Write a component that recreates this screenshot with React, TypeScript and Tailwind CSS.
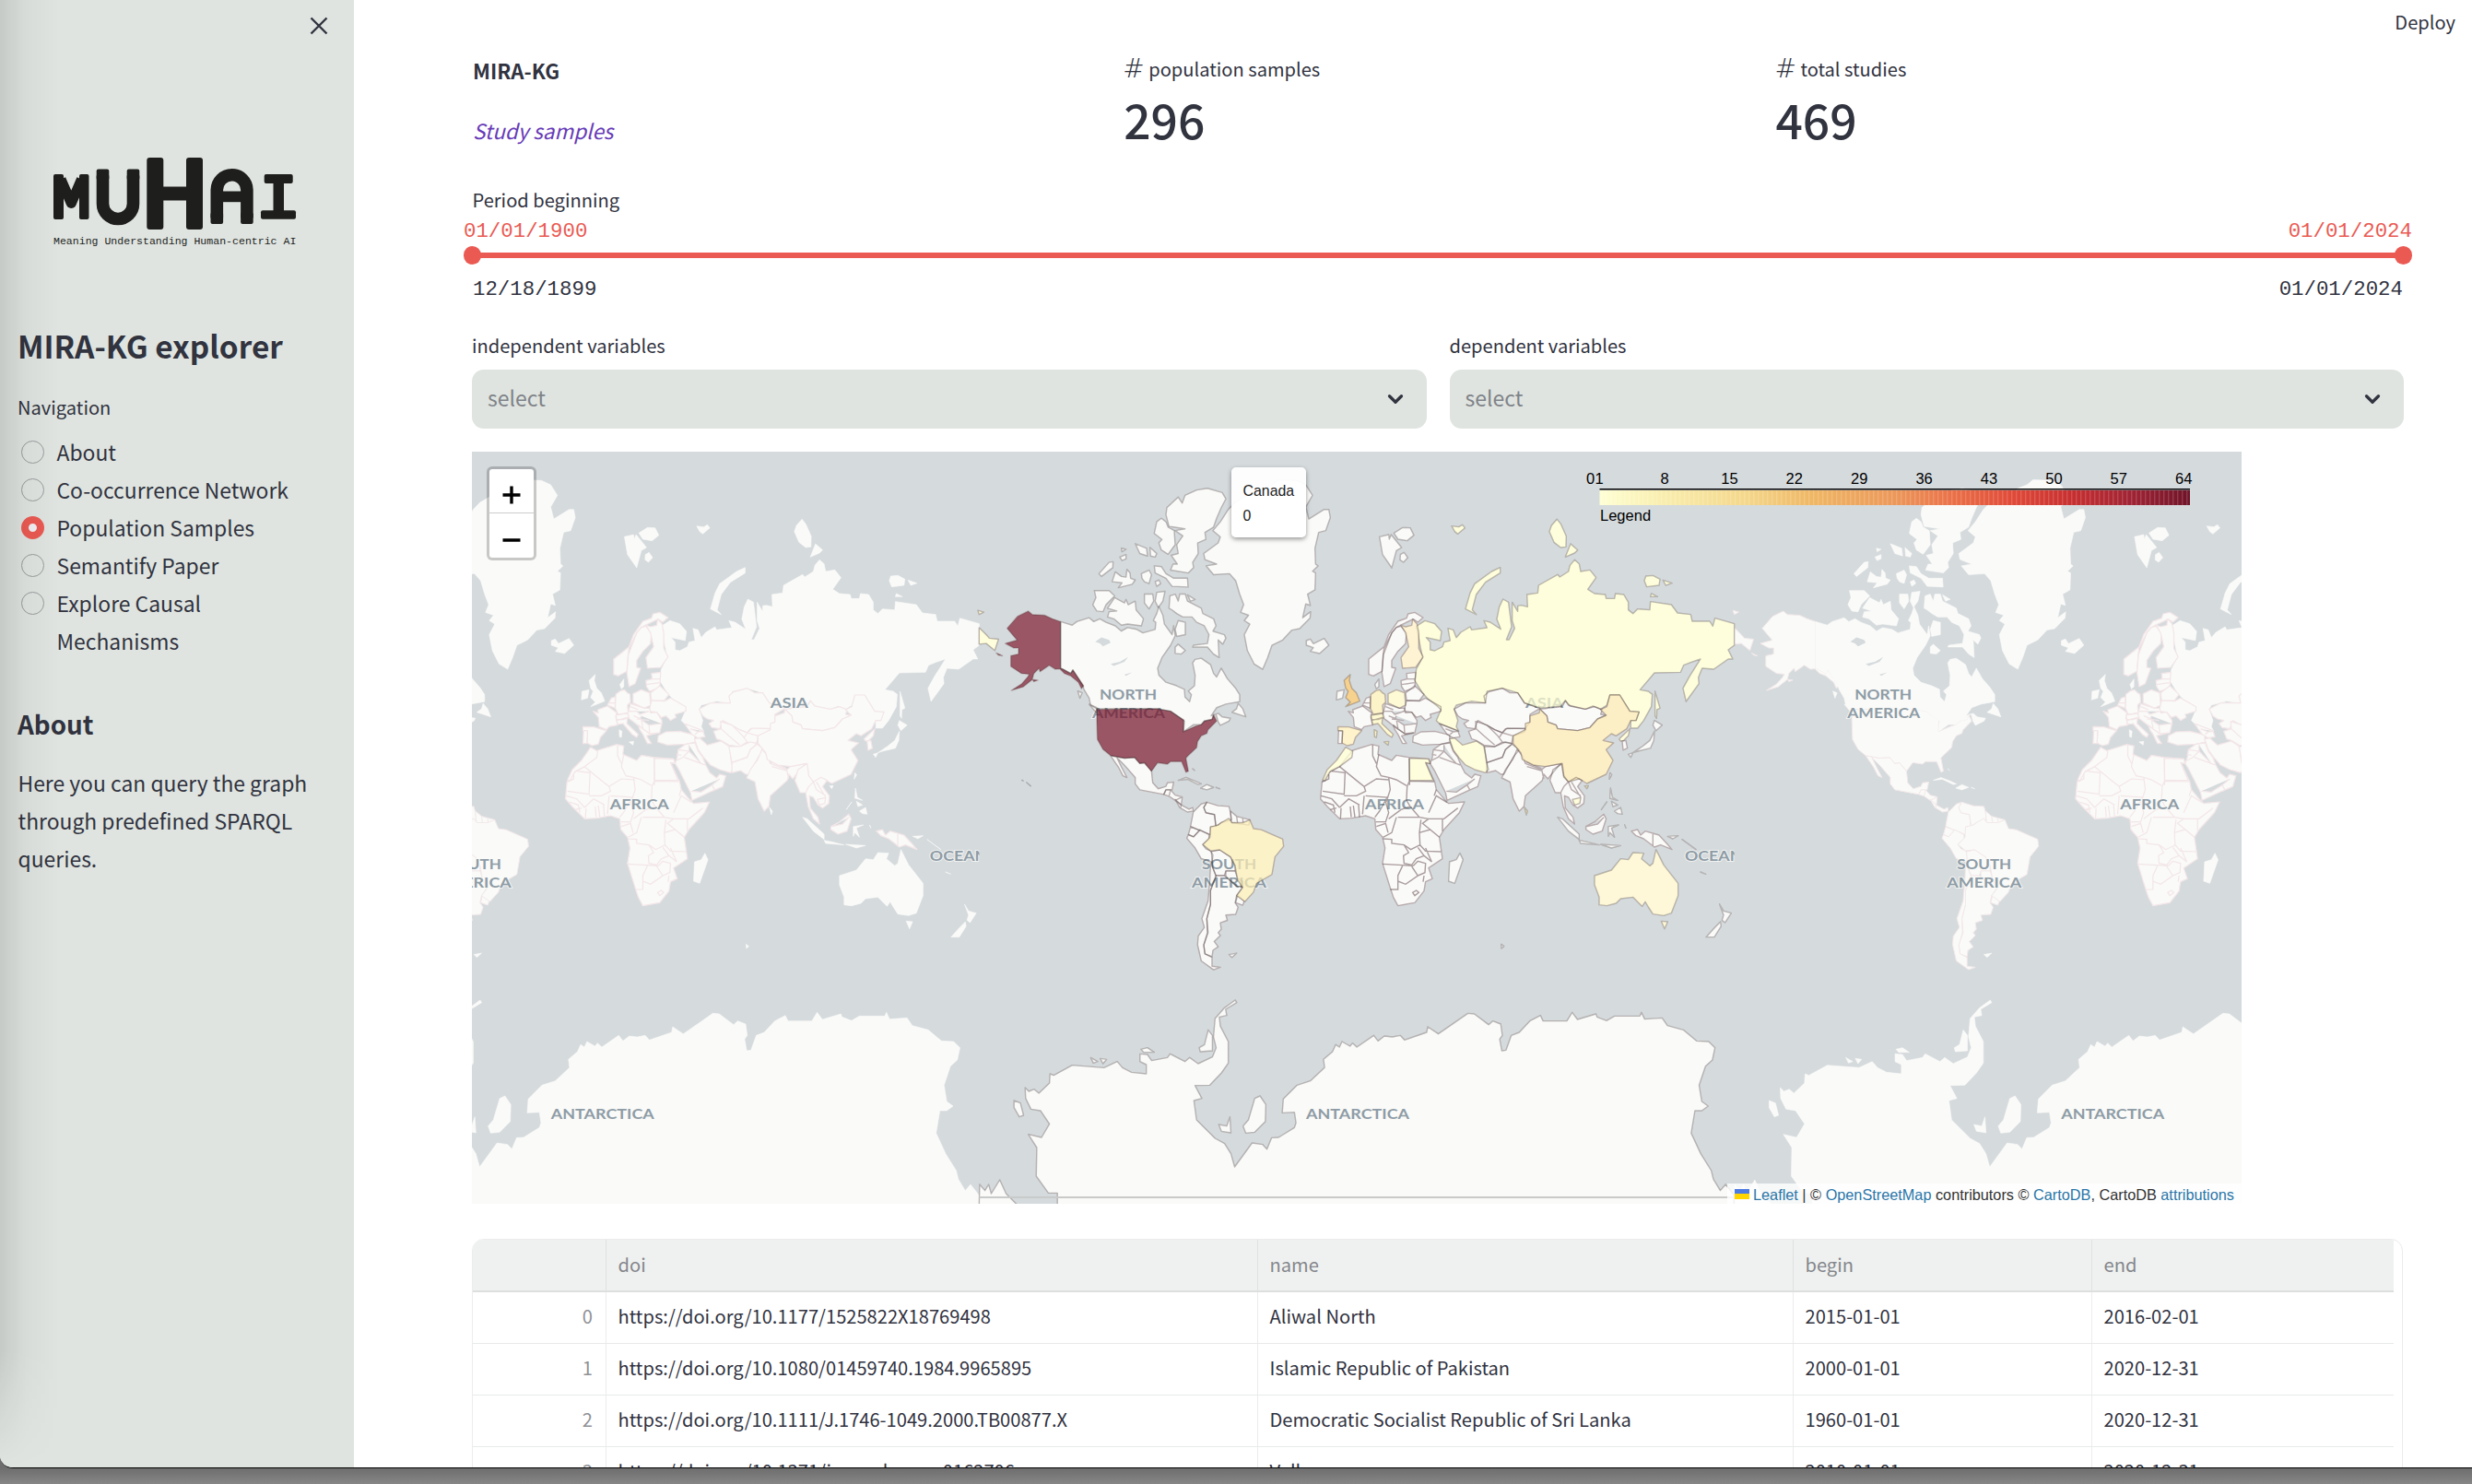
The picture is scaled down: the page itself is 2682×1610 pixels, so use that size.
import React from "react";
import { ChevronDown } from "lucide-react";

type Shape = { d: string; fill?: string };

const LAND = "#fafaf8";
const PALE = "#ffffd0";

// Each region is digitised on its own grid and placed by its transform.
const AMERICAS_TF = "translate(508 -10) scale(0.33333 0.38265)";
const EURASIA_TF = "translate(888 30) scale(0.33333)";
const ANTARCTIC_TF = "translate(548 550) scale(0.57398 0.33333)";
const WORLD = 819.2;

const americas: Shape[] = [
  { d: "M938,190 L912,225 888,250 912,268 905,285 858,315 862,332 900,345 866,350 890,375 942,372 962,392 975,430 988,460 978,482 1004,490 990,505 1008,515 990,545 1000,590 1022,628 1050,643 1066,610 1080,575 1115,560 1145,532 1170,528 1204,498 1206,480 1180,497 1190,458 1205,462 1196,430 1220,418 1222,370 1212,365 1230,350 1222,345 1220,300 1232,255 1255,250 1270,213 1265,190 1250,190 1200,217 1190,183 1212,150 1190,120 1160,108 1100,106 1080,120 1050,130 1040,150 1000,150 960,170Z" },
  { d: "M392,508 L430,518 445,508 485,497 500,508 520,500 540,510 570,520 590,535 610,525 640,530 660,540 700,530 702,510 694,505 705,485 712,465 725,490 730,515 755,545 760,520 765,548 750,575 722,610 708,640 712,660 735,680 770,690 795,700 797,722 812,735 818,715 808,705 828,690 830,660 822,625 830,615 850,612 880,630 890,655 900,665 915,640 935,670 960,695 975,715 975,735 930,742 900,752 882,775 905,768 918,778 945,782 940,790 912,802 905,792 898,770 890,772 885,785 860,790 850,800 825,800 792,820 795,790 750,762 705,755 510,755 490,745 485,725 468,700 465,690 432,645 425,655 400,643 392,640Z" },
  { d: "M738,185 L775,155 788,172 797,150 835,135 870,130 918,142 930,160 915,185 900,215 890,240 862,255 865,275 838,285 840,315 822,340 825,355 808,370 750,362 758,345 772,345 752,320 775,315 770,290 790,265 765,250 797,245 745,238 735,205Z" },
  { d: "M720,215 L735,225 742,240 762,250 765,290 742,317 720,305 712,285 722,275 697,258 705,225Z" },
  { d: "M635,287 L672,300 675,322 650,315Z M683,298 L705,315 700,325 685,322Z M590,300 L605,303 592,310Z M585,325 L605,318 605,330 592,335Z" },
  { d: "M517,372 L550,340 563,338 562,355 525,380Z M570,367 L590,380 605,382 608,360 618,370 620,385 635,390 625,402 580,412 592,398 560,395Z" },
  { d: "M655,372 L680,362 688,375 680,400 665,395 657,385Z M697,350 L720,352 735,372 760,385 805,385 807,410 755,408 735,385 700,370Z M700,395 L712,390 718,400 705,408Z" },
  { d: "M502,420 L550,420 568,435 540,460 530,480 510,478 497,460 507,440Z" },
  { d: "M568,440 L600,455 605,445 612,460 635,450 638,475 662,500 655,520 610,515 590,518 565,500 545,495 550,480 575,478 545,470Z" },
  { d: "M665,430 L692,430 695,450 680,472 665,455Z M705,425 L732,422 725,450 710,468 700,450Z" },
  { d: "M748,435 L765,430 775,450 780,430 798,430 805,450 850,470 855,485 890,500 898,520 888,535 925,545 930,555 920,572 905,560 908,610 890,600 870,580 822,580 825,575 870,570 875,545 860,520 835,510 820,495 790,495 770,485 755,475 745,470Z" },
  { d: "M775,505 L798,510 798,545 770,550 765,530Z M765,580 L775,572 798,590 785,600 765,598Z M805,432 L830,445 815,450Z" },
  { d: "M970,740 L985,755 995,778 950,765 965,755Z M485,742 L510,752 512,770Z M448,705 L462,710 455,725Z" },
  { d: "M775,958 L800,950 830,960 850,968 840,970 805,955Z M848,980 L868,970 890,978 868,985Z M898,978 L910,982Z M822,925 L828,930Z" },
  { d: "M940,1452 L965,1448 950,1460Z" },
];

const americasInner: Shape[] = [
  { d: "M555,888 L600,895 633,893 650,910 665,908 688,932 692,965 710,982 735,975 740,965 760,963 755,985 735,985 728,998 650,985 635,968 635,950 600,915 575,893 590,920 608,950 595,945 580,920 568,905Z" },
  { d: "M728,998 L735,985 750,985 765,1000 788,1005 785,1028 765,1015 745,1003Z M750,985 L745,1003 M765,1015 L788,1005" },
  { d: "M765,1012 L785,1028 810,1040 822,1035 824,1045 805,1048 780,1035Z M785,1028 L782,1037" },
  { d: "M824,1048 L850,1025 868,1020 858,1035 865,1050 893,1055 897,1088 880,1090 880,1112 840,1098 815,1088Z" },
  { d: "M868,1020 L905,1030 940,1032 945,1048 948,1070 915,1078 898,1088 893,1055 865,1050 858,1035Z" },
  { d: "M945,1045 L965,1060 1008,1070 1005,1085 948,1078Z M965,1060 L968,1078 M985,1064 L986,1078" },
  { d: "M815,1090 L845,1100 825,1118 808,1112Z" },
  { d: "M808,1112 L825,1118 845,1098 875,1112 875,1125 855,1140 865,1152 880,1158 888,1170 885,1190 850,1180 830,1150 803,1122Z" },
  { d: "M883,1160 L910,1155 945,1175 960,1200 960,1215 930,1215 925,1228 898,1228 887,1205Z" },
  { d: "M930,1215 L960,1215 968,1235 985,1245 985,1260 965,1258 930,1230Z" },
  { d: "M968,1283 L990,1300 985,1312 962,1305Z" },
  { d: "M898,1228 L925,1228 965,1258 985,1260 965,1285 960,1305 970,1318 962,1338 930,1340 935,1355 912,1362 915,1380 905,1390 912,1398 892,1415 905,1430 888,1440 885,1458 862,1450 858,1425 872,1390 868,1350 880,1310 880,1270Z" },
  { d: "M885,1190 L887,1205 898,1230 880,1270 880,1310 868,1350 870,1390 858,1425 862,1450 885,1460 885,1485 912,1488 890,1495 850,1470 838,1425 840,1400 860,1375 852,1350 872,1300 878,1240 880,1195Z" },
  { d: "M880,1090 L905,1085 915,1078 940,1066 950,1078 985,1078 1008,1070 1020,1095 1045,1098 1115,1125 1118,1145 1090,1175 1080,1225 1030,1250 1020,1275 992,1302 965,1285 985,1262 968,1240 960,1200 945,1175 910,1155 880,1158 855,1140 878,1120Z", fill: "#fceeb4" },
  { d: "M510,757 L705,755 750,762 793,787 792,820 830,805 850,800 860,790 885,785 890,772 900,790 872,815 868,825 850,832 838,848 835,865 805,890 800,895 808,932 800,935 786,905 750,905 740,912 708,908 688,932 665,908 650,910 633,893 600,895 555,888 530,870 512,842 510,790Z", fill: "#721026" },
  { d: "M392,508 L392,640 400,643 425,655 432,645 467,690 460,698 450,680 425,662 405,655 390,642 375,643 355,632 325,650 322,640 305,655 300,672 270,693 232,703 265,685 285,665 290,657 265,655 230,635 230,605 255,600 255,583 240,583 212,570 245,562 250,560 218,527 252,493 287,478 300,488 340,490 365,500Z M183,597 L203,605 190,603Z M300,672 L318,674 305,678Z", fill: "#721026" },
  { d: "M127,525 L150,545 160,555 190,558 178,590 150,570 127,572Z M123,476 L142,481 127,488Z", fill: PALE },
];

const eurasia: Shape[] = [
  { d: "M410,478 L438,460 470,470 492,495 488,525 442,515 455,530 455,555 470,558 495,545 500,530 520,525 513,485 530,490 540,515 555,498 585,480 590,490 640,483 630,460 650,465 685,488 672,455 680,415 692,390 710,400 715,440 720,480 703,522 712,522 730,485 722,460 722,400 740,430 740,412 752,410 772,415 770,375 805,370 808,345 870,310 877,318 905,300 910,280 925,262 940,275 945,300 975,295 995,320 968,358 990,372 1025,375 1028,388 1055,388 1058,372 1085,375 1100,400 1100,425 1115,437 1130,422 1170,425 1172,398 1240,408 1260,435 1303,440 1308,462 1365,462 1375,478 1382,452 1445,470 1445,540 1425,555 1440,585 1425,585 1378,618 1340,615 1328,645 1330,665 1288,723 1278,680 1300,640 1335,585 1305,595 1280,605 1270,628 1185,630 1138,685 1165,690 1178,700 1175,740 1150,785 1130,810 1108,810 1108,785 1125,785 1135,757 1105,755 1072,702 1040,702 1030,735 1010,748 985,738 960,748 905,735 895,720 880,738 815,745 762,728 740,695 690,680 640,690 635,728 590,722 540,735 533,748 545,785 540,805 548,820 485,795 475,785 490,750 478,738 445,712 430,695 405,655 410,618 430,580 422,540 415,500Z", fill: PALE },
  { d: "M683,287 L683,305 635,335 605,375 592,425 605,440 570,422 585,370 600,340 655,300Z M868,130 L880,145 898,185 897,220 880,222 858,205 843,170 850,150Z M912,210 L935,230 925,240 895,253Z M1157,315 L1180,313 1203,325 1200,345 1160,350 1152,330Z M1213,328 L1242,338 1222,345Z M1175,372 L1195,382 1172,382Z M525,152 L548,155 560,148 568,158 545,178 535,170Z M1187,690 L1203,745 1193,750 1192,778 1187,770Z", fill: PALE },
  { d: "M290,187 L320,180 322,195 328,180 362,222 345,232 330,288 300,245Z M337,175 L365,157 390,158 402,182 380,200 350,195Z M358,245 L370,238 382,255 368,270 357,262Z" },
  { d: "M52,525 L65,520 75,535 110,518 125,540 95,567 65,560 75,548 52,540Z" },
  { d: "M275,668 L288,650 288,675 280,682Z M152,690 L175,685 170,712 150,718Z" },
  { d: "M175,655 L195,635 192,655 200,680 215,695 226,722 180,740 195,725 180,710 188,690 180,680Z", fill: "#f5c162" },
  { d: "M1180,800 L1185,785 1210,800 1190,818Z M1185,820 L1183,850 1172,875 1130,885 1115,890 1145,870 1170,850Z M1100,895 L1115,890 1108,905Z M1040,955 L1046,962 1038,976Z" },
  { d: "M1042,1005 L1048,1035 1065,1045 1040,1038Z M1055,1080 L1075,1068 1080,1090 1065,1088Z M1045,1048 L1065,1060 1050,1065Z M1030,1050 L1012,1075Z" },
  { d: "M870,1100 L885,1105 940,1155 940,1172 905,1145Z M940,1175 L965,1180 1005,1190 945,1185Z M1035,1130 L1068,1125 1045,1135 1055,1165 1040,1150 1035,1162Z M1010,1188 L1075,1192 1045,1200Z M1088,1125 L1092,1135Z M1228,1162 L1262,1160 1245,1170Z M1275,1172 L1320,1205Z M1335,1278 L1352,1285Z" },
  { d: "M552,1217 L562,1238 535,1315 515,1308 518,1245 540,1238Z" },
  { d: "M990,1290 L1045,1272 1075,1235 1100,1238 1115,1215 1150,1217 1143,1235 1170,1258 1180,1250 1190,1205 1215,1255 1262,1315 1262,1355 1240,1412 1215,1420 1180,1415 1165,1392 1155,1375 1145,1390 1115,1360 1075,1365 1060,1380 1030,1388 1005,1385 1005,1360 990,1320Z M1207,1438 L1228,1440 1218,1463Z", fill: "#fff6ca" },
  { d: "M1397,1383 L1410,1405 1435,1412 1415,1443 1405,1435 1410,1418Z M1400,1440 L1402,1455 1380,1490 1353,1490 1380,1460Z M686,1513 L695,1520 687,1527Z" },
  { d: "M273,815 L282,820 280,840 274,838Z M305,855 L320,853 318,865Z M762,1068 L772,1080 768,1092Z M958,998 L970,997 965,1007Z", fill: "#fdf3b0" },
];

const eurasiaInner: Shape[] = [
  { d: "M432,450 L405,433 383,438 378,452 350,462 320,505 305,545 255,585 255,635 270,640 298,625 302,570 305,550 330,500 345,482 358,475 400,455 415,465Z" },
  { d: "M360,478 L378,500 375,535 350,560 330,590 330,612 343,615 325,665 305,675 298,630 303,570 330,500 345,482Z" },
  { d: "M360,475 L375,480 395,475 398,455 412,470 418,500 418,550 432,578 408,612 365,615 360,580 385,545 375,500Z", fill: "#fff0c3" },
  { d: "M155,805 L190,806 232,818 212,840 205,862 185,867 168,858 170,820 155,818Z", fill: "#fff0b8" },
  { d: "M157,818 L170,818 168,860 155,860Z" },
  { d: "M188,755 L205,760 203,750 235,738 265,760 262,775 268,800 240,805 232,815 208,805 205,775Z" },
  { d: "M262,700 L278,688 290,685 300,695 308,700 310,725 300,735 302,760 270,765 260,745Z", fill: "#fcefb4" },
  { d: "M235,735 L247,712 260,708 260,745Z M240,728 L260,728" },
  { d: "M318,698 L345,685 372,695 375,735 355,745 318,728Z", fill: "#fff9c8" },
  { d: "M360,655 L380,650 378,632 408,628 405,675 400,680 372,690 362,675Z M362,668 L403,662 M378,650 L405,650" },
  { d: "M375,695 L405,672 435,700 420,720 378,720Z" },
  { d: "M378,720 L420,722 440,712 490,740 490,755 455,765 458,775 440,785 425,770 410,775 395,758 370,755Z" },
  { d: "M302,760 L310,730 355,745 372,745 375,760 395,758 412,785 412,795 405,825 375,830 345,810 320,790 300,775Z M305,755 L330,755 340,765 370,755 M330,780 L370,785 M345,770 L340,780 370,800 410,795 M320,770 L345,780 350,810 M370,800 L372,825 M310,740 L335,750" },
  { d: "M262,768 L300,762 305,775 285,782 265,782Z M265,785 L300,775 298,795 335,830 330,840 315,830 285,795 268,798Z", fill: "#fdf8c0" },
  { d: "M335,800 L350,812 372,828 400,825 362,835 378,860 365,860 350,830 340,815Z" },
  { d: "M400,835 L425,822 470,820 518,832 520,855 490,862 430,865 398,855Z" },
  { d: "M485,795 L545,818 552,838 530,842 510,830Z M505,812 L530,822 545,820 M520,830 L530,822" },
  { d: "M533,748 L570,728 635,728 630,705 645,692 690,680 715,695 740,695 762,728 812,746 780,765 780,790 765,810 700,812 690,825 665,815 610,785 600,812 575,808 565,795 580,785 560,780 545,770Z" },
  { d: "M580,820 L605,812 603,788 640,800 665,815 690,825 705,810 765,812 762,822 725,835 720,860 690,855 665,870 630,865 605,850 590,845Z M605,812 L630,835 665,865 M680,840 L690,825 725,835 M640,800 L675,835 690,855" },
  { d: "M518,845 L535,842 560,865 605,852 632,870 638,920 645,945 635,955 600,945 570,930 548,905 530,880Z", fill: PALE },
  { d: "M630,870 L665,870 700,855 722,860 700,880 690,905 640,922Z" },
  { d: "M640,922 L690,905 700,880 722,862 745,880 725,905 695,960 685,960 668,948 640,955Z" },
  { d: "M738,878 L755,900 765,925 818,945 830,935 880,925 850,960 838,975 825,960 820,980 765,1030 760,1065 745,1080 725,1040 715,985 688,972 700,945 725,910Z M768,920 L815,940 816,948 770,935 M818,945 L825,975" },
  { d: "M812,748 L885,740 895,720 910,738 960,748 990,740 1015,750 1010,765 1028,768 1000,780 975,808 935,818 870,812 865,800 838,790 835,770Z" },
  { d: "M812,748 L835,770 838,790 865,800 870,812 935,818 975,808 1000,780 1028,768 1010,750 1030,740 1040,702 1072,702 1105,755 1135,757 1125,785 1108,785 1095,812 1060,835 1045,828 1018,850 1052,858 1028,880 1050,915 1028,960 965,990 940,975 905,985 890,970 882,925 830,935 790,930 755,912 750,890 725,860 725,835 765,815 765,795 780,790 780,770 810,760Z", fill: "#fceab1" },
  { d: "M1070,845 L1105,812 1100,835 1085,850 1075,852Z", fill: PALE },
  { d: "M1080,852 L1092,850 1097,875 1083,882Z" },
  { d: "M855,945 L885,925 890,965 905,985 930,970 950,980 935,1000 957,1030 955,1055 935,1070 920,1060 905,1035 892,1030 895,1070 920,1100 925,1122 905,1105 888,1065 880,1020 862,1020 845,980Z M890,1000 L905,985 915,1010 945,1030 M880,1020 L890,1000 M915,985 L945,1035" },
  { d: "M918,1042 L945,1036 942,1055 925,1060Z", fill: PALE },
  { d: "M962,1130 L990,1115 1020,1090 1028,1105 1015,1145 985,1155 962,1140Z M965,1130 L1000,1122 1020,1100" },
  { d: "M1110,1145 L1130,1140 1140,1158 1155,1145 1200,1158 1225,1185 1242,1205 1205,1190 1185,1197 1150,1170 1125,1160Z M1180,1152 L1180,1195" },
  { d: "M462,905 L465,880 490,862 520,858 530,885 545,905 555,930 568,955 590,972 600,960 620,965 610,1000 575,1015 510,1045 505,1020 470,950 455,925Z M465,880 L500,885 480,905 460,915 M500,865 L500,885 540,925 M485,905 L540,925 553,930 M508,1015 L540,1018 575,995 600,975 M575,995 L585,1012 M460,895 L475,898" },
  { d: "M203,882 L265,863 288,868 285,895 330,915 345,898 385,905 450,910 455,925 440,922 470,985 475,1010 500,1040 515,1055 567,1050 550,1085 500,1140 485,1165 495,1235 450,1265 462,1300 440,1310 435,1340 405,1378 350,1388 335,1360 325,1330 300,1250 308,1200 300,1165 278,1140 275,1105 245,1095 200,1103 160,1105 120,1065 98,1040 103,985 125,955 160,935Z" },
  { d: "M180,872 L203,885 200,905 160,935 130,950 112,982 105,978 120,945 150,915Z M387,908 L450,910 455,925 440,922 465,980 388,980Z", fill: PALE },
];

const africanBorders =
  "M160,935 L215,980 240,1000 280,975 320,978 M268,865 L268,900 280,925 M288,895 L280,935 295,965 320,970 M320,970 L345,978 378,997 M387,908 L388,995 M320,970 L325,1010 312,1050 M388,980 L380,1000 378,1045 390,1065 M388,982 L468,984 M135,950 L178,955 175,1025 105,1015 M175,1030 L215,1030 245,1015 240,1000 M125,960 L125,975 103,985 M245,1030 L315,1035 290,1080 275,1100 M165,1070 L163,1105 M195,1065 L198,1100 M205,1062 L210,1100 M222,1060 L225,1100 M240,1030 L235,1090 M160,1068 L190,1040 225,1060 M100,1030 L135,1040 160,1068 M110,1050 L140,1060 145,1085 M130,1075 L150,1070 M310,1050 L320,1085 310,1115 278,1115 M320,1105 L360,1075 390,1065 M390,1065 L420,1100 450,1105 500,1105 545,1070 M350,1100 L420,1100 M450,1085 L475,1030 510,1052 M425,1108 L420,1150 422,1190 392,1205 370,1190 330,1185 330,1172 302,1170 M345,1100 L330,1150 302,1165 M280,1130 L310,1120 318,1150 M420,1150 L455,1140 485,1165 M450,1105 L430,1120 455,1140 M495,1105 L495,1145 M422,1190 L440,1210 490,1212 M300,1252 L400,1258 M370,1190 L385,1215 368,1225 370,1250 395,1255 410,1235 435,1225 415,1198 M435,1225 L460,1245 440,1200 M365,1258 L350,1290 350,1335 325,1335 M350,1308 L375,1318 415,1290 395,1260 M415,1290 L438,1280 440,1250 415,1243 400,1258 M435,1290 L432,1310 M398,1345 L410,1338 418,1345 405,1355Z M475,1010 L468,1030";

const antarctica: Shape[] = [
  { d: "M135,763 L112,708 113,615 97,572 122,582 137,538 120,495 102,490 92,455 91,420 98,432 108,425 117,438 137,405 138,375 145,380 180,347 240,355 265,335 275,355 292,370 320,375 320,345 308,335 308,310 322,312 330,332 360,322 365,310 393,335 402,322 418,342 445,320 452,290 447,255 450,195 468,160 488,135 491,143 470,165 472,185 458,190 460,220 475,270 475,340 462,372 440,412 412,413 425,455 410,462 415,525 450,585 468,602 480,635 487,678 520,600 540,605 548,620 557,583 570,582 600,550 603,535 600,500 577,502 579,457 605,412 630,398 657,355 655,328 672,303 678,280 685,288 690,270 705,285 710,275 718,288 750,250 758,268 770,252 785,255 800,250 808,265 850,240 852,222 872,245 928,178 940,180 967,215 975,203 990,213 993,250 988,262 992,300 1000,298 1010,250 1025,240 1045,203 1065,185 1070,203 1115,203 1125,175 1135,198 1170,180 1172,190 1190,202 1205,187 1253,187 1256,175 1262,197 1295,193 1305,218 1335,232 1360,268 1383,270 1395,290 1390,330 1377,350 1365,412 1370,465 1382,480 1370,495 1357,495 1350,568 1368,635 1388,690 1392,718 1405,755 1415,735 1431,770 1431,805 152,805 152,763Z" },
  { d: "M4,805 L5,735 15,755 22,735 27,765 43,720 55,765 78,805Z" },
  { d: "M70,462 L82,470 88,510 80,515 70,485Z M525,455 L535,447 546,475 545,530 525,565 508,568 503,545 513,525Z M457,540 L472,545 478,515 480,567 462,562Z M437,232 L445,250 445,300 422,303 420,290 430,280Z M310,295 L322,290 335,305 315,305Z M215,322 L228,335 220,340Z M233,325 L245,328 238,342Z" },
];

const lakes: Shape[] = [{ d: "M505,565 L525,553 550,560 555,568 530,578 520,570Z M555,628 L585,622 612,608 600,622 565,634Z M600,658 L625,652 605,662Z" }];

function paths(list: Shape[], stroke: string, width: number) {
  return list.map((s, i) => (
    <path key={i} d={s.d} fill={LAND} stroke={stroke} strokeWidth={width} strokeLinejoin="round" vectorEffect="non-scaling-stroke" />
  ));
}

function tinted(list: Shape[]) {
  return list.map((s, i) => (
    <path
      key={i}
      d={s.d}
      fill={s.fill ?? "none"}
      fillOpacity={0.7}
      stroke="#3b3030"
      strokeOpacity={0.32}
      strokeWidth={1.4}
      strokeLinejoin="round"
      vectorEffect="non-scaling-stroke"
    />
  ));
}

function BaseWorld({ dx }: { dx: number }) {
  return (
    <g transform={`translate(${dx} 0)`}>
      <g transform={AMERICAS_TF}>
        {paths(americasInner, "#f3e9ea", 1)}
        {paths(americas, LAND, 0.6)}
        {lakes.map((s, i) => (
          <path key={i} d={s.d} fill="#d5dadd" />
        ))}
      </g>
      <g transform={EURASIA_TF}>
        {paths(eurasia, LAND, 0.6)}
        {paths(eurasiaInner, "#f3e6e8", 1.2)}
        <path d={africanBorders} fill="none" stroke="#f3e6e8" strokeWidth={1.2} vectorEffect="non-scaling-stroke" />
      </g>
      <g transform={ANTARCTIC_TF}>{paths(antarctica, LAND, 0.6)}</g>
      <MapLabels dx={dx} />
    </g>
  );
}

const continents = [
  { name: "NORTH", x: 681, y: 269, w: 62 },
  { name: "AMERICA", x: 673, y: 288.5, w: 79 },
  { name: "SOUTH", x: 792, y: 453, w: 59 },
  { name: "AMERICA", x: 781, y: 473, w: 81 },
  { name: "AFRICA", x: 969, y: 388, w: 64 },
  { name: "ASIA", x: 1143, y: 278, w: 41 },
  { name: "OCEANIA", x: 1316, y: 443.5, w: 80 },
  { name: "ANTARCTICA", x: 905, y: 724, w: 112 },
];

function MapLabels({ dx }: { dx: number }) {
  return (
    <g fontSize="14.5" fontWeight="700" fill="#8e9ca6" stroke="#fafaf8" strokeWidth="2" strokeOpacity="0.7" paintOrder="stroke" fontFamily="Lato, sans-serif">
      {continents
        .filter((c) => c.x + c.w + dx > 0 && c.x + dx < 1920)
        .map((c) => (
          <g key={c.x} clipPath={c.name === "OCEANIA" ? "url(#seam)" : undefined}>
            <text x={c.x} y={c.y} textLength={c.w} lengthAdjust="spacingAndGlyphs">
              {c.name}
            </text>
          </g>
        ))}
    </g>
  );
}

const ticks = ["8", "15", "22", "29", "36", "43", "50", "57", "64"];

function WorldMap() {
  return (
    <svg className="block h-[816px] w-[1920px] bg-[#d5dadd]" viewBox="0 0 1920 816">
      <defs>
        <clipPath id="seam">
          <rect x="1200" y="0" width="169.7" height="816" />
        </clipPath>
        <linearGradient id="ramp">
          <stop offset="0" stopColor="#ffffd4" />
          <stop offset="0.1" stopColor="#f9efb0" />
          <stop offset="0.25" stopColor="#f4d78a" />
          <stop offset="0.36" stopColor="#efb765" />
          <stop offset="0.5" stopColor="#ec985a" />
          <stop offset="0.6" stopColor="#ea7048" />
          <stop offset="0.7" stopColor="#e04a38" />
          <stop offset="0.8" stopColor="#c72f30" />
          <stop offset="0.9" stopColor="#a02434" />
          <stop offset="1" stopColor="#6f1429" />
        </linearGradient>
        <pattern id="bands" width="5" height="20" patternUnits="userSpaceOnUse">
          <rect width="1.4" height="20" fill="#ffffff" fillOpacity="0.16" />
        </pattern>
      </defs>
      <BaseWorld dx={-WORLD} />
      <BaseWorld dx={0} />
      <BaseWorld dx={WORLD} />
      <g transform={AMERICAS_TF}>
        {tinted(americasInner)}
        {tinted(americas)}
        <path d="M265,957 L272,960 M280,963 L296,975" stroke="#a5a9aa" strokeWidth="4" fill="none" />
      </g>
      <g transform={EURASIA_TF}>
        {tinted(eurasia)}
        {tinted(eurasiaInner)}
        <path d={africanBorders} fill="none" stroke="#3b3030" strokeOpacity={0.4} strokeWidth={1.4} vectorEffect="non-scaling-stroke" />
      </g>
      <g transform={ANTARCTIC_TF}>{tinted(antarctica)}</g>
      <path d="M550.6 809H1369" stroke="#c9cbca" strokeWidth="2" />
      <g fontFamily="'Liberation Sans', Arial, sans-serif" fontSize="16.5" fill="#000">
        <text x="1213.5" y="35" textAnchor="middle">0</text>
        <text x="1223" y="35" textAnchor="middle">1</text>
        {ticks.map((t, i) => (
          <text key={t} x={1294 + i * 70.4} y="35" textAnchor="middle">
            {t}
          </text>
        ))}
        <path d="M1223.5 40.7H1864" stroke="#000" strokeWidth="1.6" />
        <rect x="1223.5" y="42" width="640.5" height="16" fill="url(#ramp)" />
        <rect x="1223.5" y="42" width="640.5" height="16" fill="url(#bands)" />
        <text x="1224" y="75">Legend</text>
      </g>
    </svg>
  );
}

function MuhaiLogo() {
  return (
    <svg role="img" aria-label="MUHAI" className="h-[80px] w-[264px]" viewBox="58 169.5 264 80" fill="#1e1e1c" stroke="none">
      <rect x="58" y="188.5" width="11" height="49" rx="2" />
      <rect x="86" y="188.5" width="10.5" height="49" rx="2" />
      <g stroke="#1e1e1c" strokeWidth="11" fill="none" strokeLinejoin="round">
        <path d="M66 194L77.3 220L88.5 194" />
        <path d="M111.5 190V220.5A16.3 16.3 0 0 0 144.5 220.5V190" strokeWidth="13.6" strokeLinecap="butt" />
        <path d="M235.3 236V205.5A16.3 16.3 0 0 1 267.9 205.5V236" strokeWidth="13.6" />
      </g>
      <rect x="104.7" y="183" width="13.6" height="12" rx="2" />
      <rect x="137.7" y="183" width="13.6" height="12" rx="2" />
      <rect x="228.5" y="230" width="13.6" height="12.5" rx="2" />
      <rect x="261.1" y="230" width="13.6" height="12.5" rx="2" />
      <rect x="238" y="207" width="27" height="11.7" />
      <rect x="159.3" y="170.5" width="18" height="78" rx="3" />
      <rect x="202" y="170.5" width="18" height="78" rx="3" />
      <rect x="170" y="202" width="40" height="15" />
      <rect x="286.7" y="188.5" width="31" height="10" rx="2" />
      <rect x="296.5" y="192" width="11.5" height="42" />
      <rect x="283" y="227.7" width="38" height="9.6" rx="2" />
    </svg>
  );
}

const nav = ["About", "Co-occurrence Network", "Population Samples", "Semantify Paper", "Explore Causal Mechanisms"];

function Sidebar() {
  return (
    <aside className="relative h-full w-[384px] shrink-0 bg-[#dfe4e0]">
      <svg className="absolute left-[336px] top-[18px] size-[20px]" viewBox="0 0 20 20" stroke="#31333f" strokeWidth="2.4">
        <path d="M1.5 1.5L18.5 18.5M18.5 1.5L1.5 18.5" />
      </svg>
      <div className="pl-[58px] pt-[169.5px]">
        <MuhaiLogo />
        <p className="mt-[3px] whitespace-nowrap font-['Liberation_Mono',monospace] text-[11.55px] leading-[18px] text-[#1e1e1c]">
          Meaning Understanding Human-centric AI
        </p>
      </div>
      <h1 className="mt-[79px] pl-[19px] text-[33.4px] font-bold leading-[50px]">MIRA-KG explorer</h1>
      <p className="mt-[25px] pl-[19px] text-[20.1px] leading-[34px]">Navigation</p>
      <ul className="mt-[11px] pl-[23px]">
        {nav.map((item) => (
          <li key={item} className="flex gap-[13.5px]">
            <span
              className={
                item === "Population Samples"
                  ? "mt-[8px] size-[25px] shrink-0 rounded-full border-8 border-[#ea5a53] bg-[#f0f0f4]"
                  : "mt-[8px] size-[25px] shrink-0 rounded-full border border-[#9a9d9c] bg-[#e0e4e1]"
              }
            />
            <span className="w-[260px] text-[22.9px] leading-[41px]">{item}</span>
          </li>
        ))}
      </ul>
      <h3 className="mt-[47px] pl-[19px] text-[27.8px] font-bold leading-[44px]">About</h3>
      <p className="mt-[22px] w-[350px] pl-[19.5px] text-[22.9px] leading-[41px]">Here you can query the graph through predefined SPARQL queries.</p>
      <div className="absolute inset-y-0 left-0 w-[64px] bg-[linear-gradient(to_right,rgba(0,0,0,0.11),rgba(0,0,0,0.03)_45%,transparent)] [mask-image:linear-gradient(to_bottom,black_92%,transparent)]" />
    </aside>
  );
}

function Metric({ label, value }: { label: string; value: string }) {
  return (
    <div className="flex flex-col">
      <div className="flex h-[34px] items-center gap-[3px] text-[20.1px]">
        <span className="-ml-px mr-px w-[24px] font-['DejaVu_Sans',sans-serif] text-[28px] font-extralight leading-[34px]">#</span>
        <span className="leading-[34px]">{label}</span>
      </div>
      <div className="-mt-[1px] text-[51.6px] font-medium leading-[76px]">{value}</div>
    </div>
  );
}

function SelectBox({ label }: { label: string }) {
  return (
    <div>
      <div className="h-[43px] text-[20.1px] leading-[34px]">{label}</div>
      <div className="flex h-[64px] items-center justify-between rounded-[12.8px] bg-[#dfe4e0] pl-[17px] pr-[21px]">
        <span className="-mt-[3px] text-[23px] text-[#7f8388]">select</span>
        <ChevronDown className="size-[26px]" strokeWidth={3} />
      </div>
    </div>
  );
}

const rows = [
  ["0", "https://doi.org/10.1177/1525822X18769498", "Aliwal North", "2015-01-01", "2016-02-01"],
  ["1", "https://doi.org/10.1080/01459740.1984.9965895", "Islamic Republic of Pakistan", "2000-01-01", "2020-12-31"],
  ["2", "https://doi.org/10.1111/J.1746-1049.2000.TB00877.X", "Democratic Socialist Republic of Sri Lanka", "1960-01-01", "2020-12-31"],
  ["3", "https://doi.org/10.1371/journal.pone.0162706", "Valle", "2010-01-01", "2020-12-31"],
];

function DataTable() {
  return (
    <div className="mt-[38px] h-[400px] w-[2095px] overflow-hidden rounded-[12.8px] border-[1.5px] border-[#ebeceb]">
      <div className="w-[2084px] text-[20.12px]">
        <div className="grid h-[57px] grid-cols-[145px_707px_581px_324px_1fr] border-b-2 border-[#dddfde] bg-[#eff1f0] leading-[54px] text-[#84868c]">
          {["", "doi", "name", "begin", "end"].map((h, i) => (
            <div key={h} className={i < 4 ? "border-r-[1.5px] border-[#dfe1e0] pl-[12.5px]" : "pl-[12.5px]"}>
              {h}
            </div>
          ))}
        </div>
        {rows.map((r) => (
          <div key={r[0]} className="grid h-[56px] grid-cols-[145px_707px_581px_324px_1fr] border-b-[1.5px] border-[#e8e9e9] leading-[51px]">
            {r.map((c, i) => (
              <div
                key={i}
                className={
                  i === 0
                    ? "border-r-[1.5px] border-[#ececec] pr-[14px] text-right text-[#8f9196]"
                    : i < 4
                      ? "border-r-[1.5px] border-[#ececec] pl-[12.5px]"
                      : "pl-[12.5px]"
                }
              >
                {c}
              </div>
            ))}
          </div>
        ))}
      </div>
    </div>
  );
}

export default function App() {
  return (
    <div className="relative h-[1610px] w-[2682px] overflow-hidden bg-[linear-gradient(to_bottom,#6e6e6e_1593px,#868686_1610px)] font-['Noto_Sans_CJK_SC','Noto_Sans',sans-serif] text-[#31333f]">
      <div className="flex h-[1593px] w-full overflow-hidden rounded-bl-[14px] border-b-[1.5px] border-black bg-white">
        <Sidebar />
        <main className="relative w-[2298px] overflow-hidden pl-[128px] pt-[58px]">
          <span className="absolute right-[18px] top-[7px] text-[20.1px] leading-[34px]">Deploy</span>
          <div className="grid h-[142px] w-[2096px] grid-cols-3 gap-[25.6px]">
            <div className="text-[22.4px]">
              <p className="-mt-px pl-px text-[22.2px] font-bold leading-[38px]">MIRA-KG</p>
              <p className="mt-[27px] pl-px italic leading-[38px] text-[#673ab7]">Study samples</p>
            </div>
            <Metric label="population samples" value="296" />
            <Metric label="total studies" value="469" />
          </div>
          <section className="w-[2096px]">
            <div className="pl-[0.5px] text-[20.1px] leading-[34px]">Period beginning</div>
            <div className="-mx-[9px] flex h-[32px] justify-between font-['Liberation_Mono',monospace] text-[22.4px] leading-[34px] text-[#ea5a53]">
              <span>01/01/1900</span>
              <span>01/01/2024</span>
            </div>
            <div className="-mx-[9px] mt-[1px] flex h-[20px] items-center">
              <span className="size-[19.2px] rounded-full bg-[#ea5a53]" />
              <span className="-mx-[2px] h-[6.4px] flex-1 bg-[#ea5a53]" />
              <span className="size-[19.2px] rounded-full bg-[#ea5a53]" />
            </div>
            <div className="mt-[11px] flex h-[31px] justify-between pl-[1px] pr-[1px] font-['Liberation_Mono',monospace] text-[22.4px] leading-[32px]">
              <span>12/18/1899</span>
              <span>01/01/2024</span>
            </div>
          </section>
          <section className="mt-[29px] grid w-[2096px] grid-cols-2 gap-[25px]">
            <SelectBox label="independent variables" />
            <SelectBox label="dependent variables" />
          </section>
          <section className="relative mt-[25px] h-[816px] w-[1920px]">
            <WorldMap />
            <div className="absolute left-[16px] top-[16px] flex h-[102px] w-[54px] flex-col overflow-hidden rounded-[6px] border-[3px] border-black/20 bg-white bg-clip-padding">
              <div className="flex flex-1 items-center justify-center border-b-[1.5px] border-[#ccc] pt-[9px]">
                <svg className="size-[20px]" viewBox="0 0 20 20" stroke="#000" strokeWidth="3.4">
                  <path d="M0.5 10H19.5M10 0.5V19.5" />
                </svg>
              </div>
              <div className="flex flex-1 items-center justify-center pt-[10px]">
                <svg className="size-[20px]" viewBox="0 0 20 20" stroke="#000" strokeWidth="3.4">
                  <path d="M0.5 10H19.5" />
                </svg>
              </div>
            </div>
            <div className="absolute left-[824px] top-[17px] h-[76px] w-[81px] rounded-[5px] bg-white/95 px-[12.5px] pt-[12px] font-['Liberation_Sans',Arial,sans-serif] text-[15.9px] leading-[27px] text-[#222] shadow-[0_2px_5px_rgba(0,0,0,0.4)]">
              <div>Canada</div>
              <div>0</div>
            </div>
            <div className="absolute bottom-0 right-0 flex h-[22px] w-[558px] items-center bg-white/80 pl-[8px] font-['Liberation_Sans',Arial,sans-serif] text-[16.27px] text-[#333]">
              <span className="mr-[4px] flex h-[11px] w-[16px] shrink-0 flex-col">
                <span className="h-1/2 bg-[#4c7be1]" />
                <span className="h-1/2 bg-[#ffd500]" />
              </span>
              <span className="whitespace-nowrap pt-px leading-[22px]">
                <span className="text-[#2a76a8]">Leaflet</span> | © <span className="text-[#2a76a8]">OpenStreetMap</span> contributors ©{" "}
                <span className="text-[#2a76a8]">CartoDB</span>, CartoDB <span className="text-[#2a76a8]">attributions</span>
              </span>
            </div>
          </section>
          <DataTable />
        </main>
      </div>
    </div>
  );
}
